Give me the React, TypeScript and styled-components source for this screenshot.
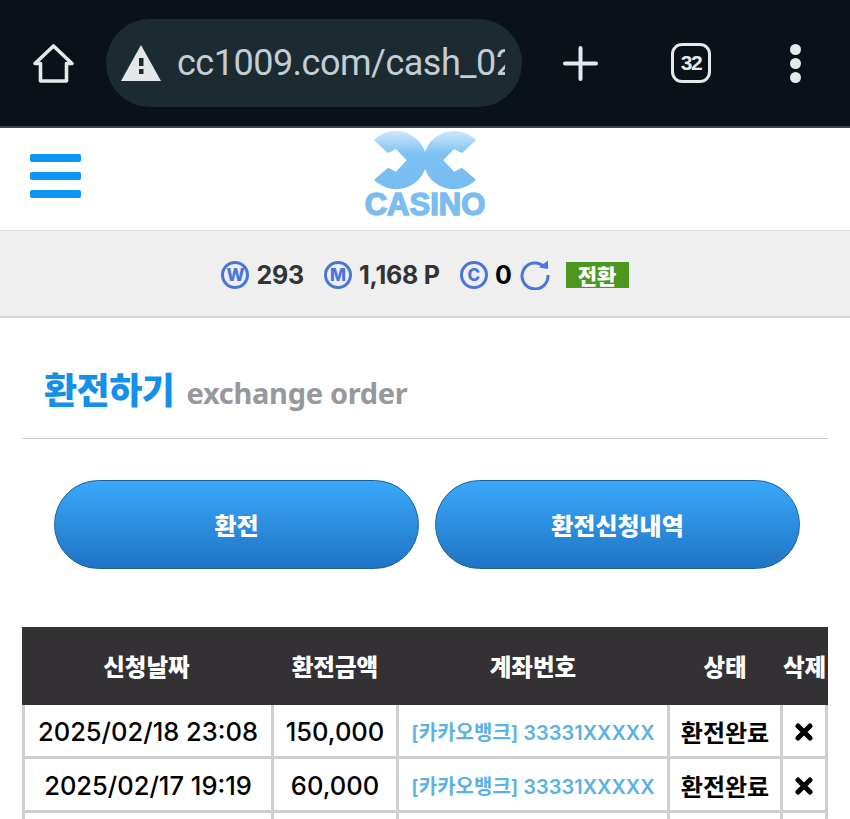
import styled, { createGlobalStyle } from 'styled-components'

const GlobalStyle = createGlobalStyle`
  html,
  body {
    margin: 0;
    padding: 0;
    background: #fff;
    overflow: hidden;
  }

  * {
    box-sizing: border-box;
  }
`

const KR = `"Noto Sans CJK KR", sans-serif`
const NUM = `Inter, "Noto Sans CJK KR", sans-serif`

const Page = styled.div`
  width: 850px;
  height: 819px;
  overflow: hidden;
  background: #fff;
`

const BrowserBar = styled.div`
  display: flex;
  align-items: center;
  height: 128px;
  padding: 0 46px 0 33px;
  background: #0b1118;
  border-bottom: 2px solid #3f4348;
  color: #e6e9ea;
`

const UrlPill = styled.div`
  display: flex;
  align-items: center;
  gap: 16px;
  width: 416px;
  height: 88px;
  margin: 0 41px 0 32px;
  padding: 0 17px 0 15px;
  border-radius: 44px;
  background: #1c2a32;
`

const UrlText = styled.span`
  flex: 1;
  overflow: hidden;
  white-space: nowrap;
  font: 400 36px Roboto, sans-serif;
  letter-spacing: -0.5px;
  color: #c3cdd3;
`

const TabCount = styled.div`
  display: flex;
  align-items: center;
  justify-content: center;
  width: 40px;
  height: 40px;
  margin: 0 79px 0 73px;
  border: 3px solid #e6e9ea;
  border-radius: 11px;
  font: 700 21px "Liberation Sans", sans-serif;
  letter-spacing: -1.5px;
`

const Kebab = styled.div`
  display: flex;
  flex-direction: column;
  gap: 3px;

  i {
    width: 11px;
    height: 11px;
    border-radius: 50%;
    background: #e6e9ea;
  }
`

const SiteHeader = styled.header`
  display: grid;
  grid-template-columns: 1fr auto 1fr;
  align-items: center;
  height: 102px;
  padding: 0 30px;
`

const Burger = styled.div`
  display: flex;
  flex-direction: column;
  gap: 10px;
  width: 51px;
  margin-bottom: 6px;

  i {
    height: 8px;
    border-radius: 2px;
    background: #0f95f4;
  }
`

const Logo = styled.div`
  display: flex;
  flex-direction: column;
  align-items: center;
  width: 122px;
  height: 100%;
  padding-top: 1px;
`

const LogoWord = styled.span`
  margin-top: -4px;
  font: 700 31px/28px "Liberation Sans", sans-serif;
  color: #7bbdf0;
  -webkit-text-stroke: 1.5px #7bbdf0;
`

const BalanceBar = styled.div`
  display: flex;
  align-items: center;
  justify-content: center;
  height: 88px;
  padding-top: 3px;
  background: #efeff0;
  border-top: 1px solid #dcdcde;
  border-bottom: 2px solid #d2d2d4;
`

const Coin = styled.span`
  display: flex;
  align-items: center;
  justify-content: center;
  width: 28px;
  height: 28px;
  margin-right: 7px;
  border: 3px solid #4a76d9;
  border-radius: 50%;
  font: 800 17px ${NUM};
  color: #4a76d9;
`

const Amount = styled.span<{ $gap: number; $dark?: boolean }>`
  margin-right: ${({ $gap }) => $gap}px;
  font: 700 25px ${NUM};
  letter-spacing: -0.2px;
  color: ${({ $dark }) => ($dark ? '#000' : '#333')};
`

const SwapButton = styled.span`
  display: flex;
  align-items: center;
  justify-content: center;
  width: 63px;
  height: 26px;
  margin-left: 16px;
  background: #4c971f;
  font: 900 21px/26px ${KR};
  color: #fff;
`

const TitleRow = styled.div`
  display: flex;
  align-items: baseline;
  gap: 12px;
  height: 121px;
  margin: 0 22px;
  padding: 47px 0 0 22px;
  border-bottom: 1px solid #cfcfd2;
`

const Title = styled.h2`
  margin: 0;
  font: 900 36px/46px ${KR};
  letter-spacing: -0.5px;
  color: #1590e8;
`

const SubTitle = styled.span`
  font: 700 29px "Noto Sans", sans-serif;
  letter-spacing: -0.3px;
  color: #98989c;
`

const ButtonRow = styled.div`
  display: flex;
  gap: 16px;
  margin-top: 41px;
  padding: 0 50px 0 54px;
`

const PillButton = styled.button`
  flex: 1;
  height: 89px;
  padding: 0;
  border: 1px solid #1d5f99;
  border-radius: 45px;
  background: linear-gradient(#3aa8fa, #1f74c4);
  font: 900 24px ${KR};
  color: #fff;
`

const OrderTable = styled.table`
  width: 806px;
  margin: 58px 22px 0;
  border-collapse: separate;
  border-spacing: 0;
  table-layout: fixed;

  th {
    height: 78px;
    padding: 0 3px 0 0;
    background: #333133;
    font: 900 23.5px ${KR};
    color: #fff;
    white-space: nowrap;
  }

  td {
    height: 54px;
    padding: 2px 0 0;
    border-right: 3px solid #cfcfcf;
    border-bottom: 3px solid #cfcfcf;
    text-align: center;
    white-space: nowrap;
    overflow: hidden;
    font: 500 25.5px ${NUM};
    color: #000;
  }

  td:first-child {
    border-left: 3px solid #cfcfcf;
  }
`

const BankCell = styled.td`
  && {
    font: 600 20px ${NUM};
    color: #5ab2e4;
  }
`

const StatusCell = styled.td`
  && {
    font: 700 24px ${KR};
  }
`

const DeleteMark = styled.svg`
  display: block;
  margin: auto;
`

const orders = [
  { date: '2025/02/18 23:08', amount: '150,000' },
  { date: '2025/02/17 19:19', amount: '60,000' },
]

function App() {
  return (
    <Page>
      <GlobalStyle />
      <BrowserBar>
        <svg width="41" height="41" viewBox="0 0 41 41" fill="none" stroke="#e6e9ea" strokeWidth="3.6" strokeLinejoin="round">
          <path d="M20.5 3 L39 20.5 H33.5 V38 H7.5 V20.5 H2 Z" />
        </svg>
        <UrlPill>
          <svg width="40" height="36" viewBox="0 0 40 36">
            <path d="M20 0 L40 36 H0 Z" fill="#e3e7e9" />
            <rect x="18" y="13" width="4.5" height="8" fill="#1c2a32" />
            <rect x="18" y="24" width="4.5" height="5" fill="#1c2a32" />
          </svg>
          <UrlText>cc1009.com/cash_02</UrlText>
        </UrlPill>
        <svg width="35" height="35" viewBox="0 0 35 35" stroke="#e6e9ea" strokeWidth="4" strokeLinecap="round">
          <path d="M17.5 2 V33 M2 17.5 H33" />
        </svg>
        <TabCount>32</TabCount>
        <Kebab>
          <i />
          <i />
          <i />
        </Kebab>
      </BrowserBar>

      <SiteHeader>
        <Burger>
          <i />
          <i />
          <i />
        </Burger>
        <Logo>
          <svg width="130" height="66" viewBox="0 0 390 198">
            <defs>
              <linearGradient id="logoFill" x1="0" y1="0" x2="0" y2="1">
                <stop offset="0" stopColor="#cde8fb" />
                <stop offset="0.4" stopColor="#7cc1f3" />
                <stop offset="1" stopColor="#76bcf0" />
              </linearGradient>
            </defs>
            <path
              fill="url(#logoFill)"
              d="M42 34 A92 92 0 0 1 195 68 A92 92 0 0 1 348 34 L306 72 L282 60 L250 94 L282 128 L306 116 L348 152 A92 92 0 0 1 195 120 A92 92 0 0 1 42 152 L84 116 L108 128 L140 94 L108 60 L84 72 Z"
            />
          </svg>
          <LogoWord>CASINO</LogoWord>
        </Logo>
      </SiteHeader>

      <BalanceBar>
        <Coin>W</Coin>
        <Amount $gap={20}>293</Amount>
        <Coin>M</Coin>
        <Amount $gap={20}>1,168 P</Amount>
        <Coin>C</Coin>
        <Amount $gap={8} $dark>
          0
        </Amount>
        <svg width="30" height="30" viewBox="0 0 30 30" fill="none">
          <path d="M24.5 7 A13 13 0 1 0 28 15" stroke="#4a76d9" strokeWidth="3" />
          <path d="M19 7.5 L28 9 L28 0.5 Z" fill="#4a76d9" />
        </svg>
        <SwapButton>전환</SwapButton>
      </BalanceBar>

      <TitleRow>
        <Title>환전하기</Title>
        <SubTitle>exchange order</SubTitle>
      </TitleRow>

      <ButtonRow>
        <PillButton>환전</PillButton>
        <PillButton>환전신청내역</PillButton>
      </ButtonRow>

      <OrderTable>
        <colgroup>
          <col width="252" />
          <col width="125" />
          <col width="271" />
          <col width="113" />
          <col width="45" />
        </colgroup>
        <thead>
          <tr>
            <th>신청날짜</th>
            <th>환전금액</th>
            <th>계좌번호</th>
            <th>상태</th>
            <th>삭제</th>
          </tr>
        </thead>
        <tbody>
          {orders.map(order => (
            <tr key={order.date}>
              <td>{order.date}</td>
              <td>{order.amount}</td>
              <BankCell>[카카오뱅크] 33331XXXXX</BankCell>
              <StatusCell>환전완료</StatusCell>
              <td>
                <DeleteMark width="18" height="18" viewBox="0 0 18 18" stroke="#000" strokeWidth="5" strokeLinecap="round">
                  <path d="M3 3 L15 15 M15 3 L3 15" />
                </DeleteMark>
              </td>
            </tr>
          ))}
          <tr>
            <td />
            <td />
            <td />
            <td />
            <td />
          </tr>
        </tbody>
      </OrderTable>
    </Page>
  )
}

export default App
